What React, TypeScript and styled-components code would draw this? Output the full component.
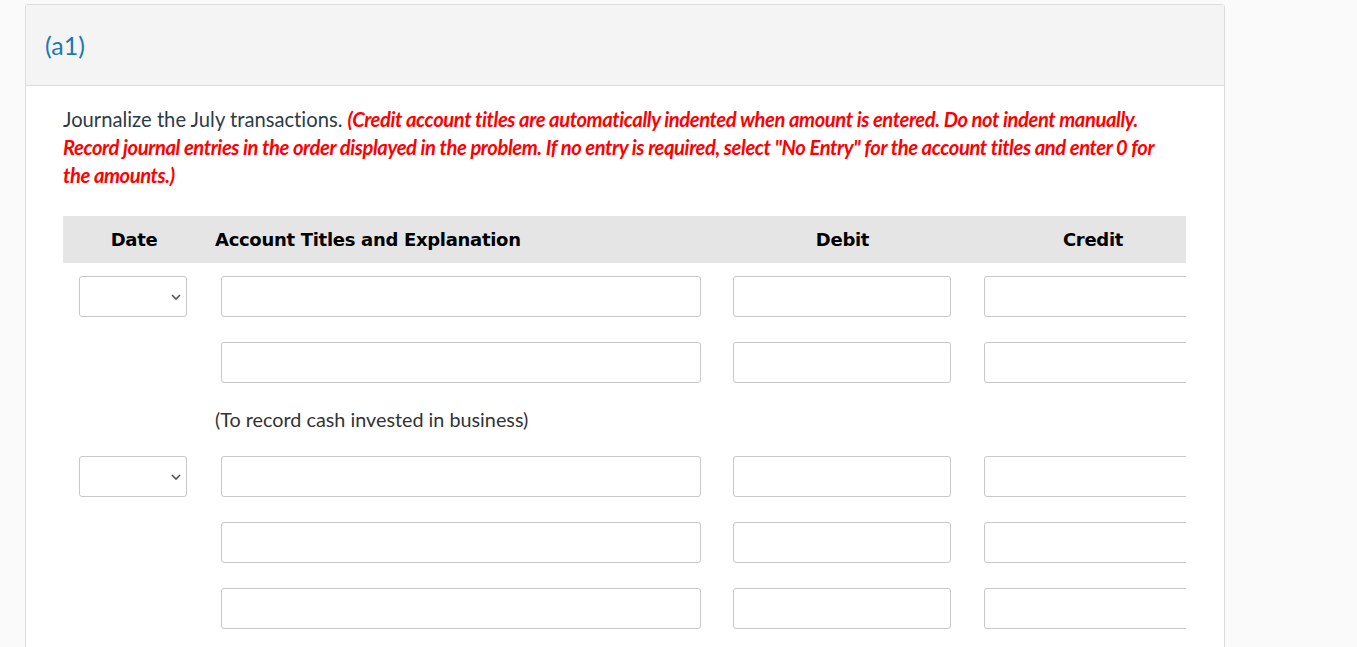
import React from "react";
import styled, { createGlobalStyle } from "styled-components";

const Global = createGlobalStyle`
  html, body { margin: 0; padding: 0; background: #fafafa; }
  body { font-family: Lato, "Open Sans", sans-serif; font-variant-ligatures: none; }
  * { box-sizing: border-box; }
`;

const Page = styled.div`
  padding: 4px 0 0 25px;
  height: 647px;
  overflow: hidden;
`;

const Card = styled.section`
  width: 1200px;
  border: 1px solid #dcdcdc;
  border-radius: 3px 3px 0 0;
  background: #fff;
  min-height: 700px;
`;

const CardHeader = styled.header`
  height: 81px;
  background: #f4f4f4;
  border-bottom: 1px solid #dcdcdc;
  display: flex;
  align-items: center;
  padding: 0 0 0 19px;
  font-size: 25px;
  color: #1c78b5;
  font-family: Lato, sans-serif;
`;

const Body = styled.div`
  padding: 19px 0 0 37px;
`;

const Instructions = styled.p`
  margin: 0;
  width: 1105px;
  font-size: 20.2px;
  line-height: 28px;
  color: #2d3b45;
`;

const Red = styled.em`
  color: #ff0000;
  font-weight: 700;
  font-style: italic;
  letter-spacing: -0.42px;
`;

const TableWrap = styled.div`
  margin-top: 27px;
  width: 1123px;
  overflow: hidden;
`;

const Grid = styled.div`
  display: grid;
  grid-template-columns: 142px 512px 251px 250px;
  width: 1155px;
`;

const HeaderRow = styled(Grid)`
  height: 47px;
  background: #e5e5e5;
  align-items: center;
  font-family: "DejaVu Sans", Verdana, sans-serif;
  font-weight: 700;
  font-size: 18px;
  letter-spacing: -0.3px;
  color: #000;
`;

const HeadCell = styled.div<{ $align?: "left" | "center" }>`
  text-align: ${(p) => p.$align ?? "center"};
  padding-left: ${(p) => (p.$align === "left" ? "10px" : "0")};
`;

const Rows = styled.div`
  display: flex;
  flex-direction: column;
  gap: 25px;
  padding-top: 13px;
`;

const EntryRow = styled(Grid)`
  height: 41px;
`;

const Cell = styled.div`
  padding-left: 16px;
`;

const TextInput = styled.input<{ $w: number }>`
  display: block;
  width: ${(p) => p.$w}px;
  height: 41px;
  border: 1px solid #c8c8c8;
  border-radius: 3px;
  background: #fff;
  padding: 0 8px;
  font: inherit;
  outline: none;
`;

const SelectBox = styled.div`
  width: 108px;
  height: 41px;
  border: 1px solid #c8c8c8;
  border-radius: 3px;
  background: #fff;
  display: flex;
  align-items: center;
  justify-content: flex-end;
  padding-right: 4px;
`;

const Explanation = styled.div`
  height: 23px;
  line-height: 23px;
  padding-left: 152px;
  font-size: 19.8px;
  color: #333;
`;

const Chevron = () => (
  <svg width="12" height="8" viewBox="0 0 12 8">
    <path d="M2 2 L6 6 L10 2" fill="none" stroke="#555" strokeWidth="1.6" />
  </svg>
);

const Entry: React.FC<{ date?: boolean }> = ({ date }) => (
  <EntryRow>
    <Cell>
      {date && (
        <SelectBox>
          <Chevron />
        </SelectBox>
      )}
    </Cell>
    <Cell>
      <TextInput $w={480} />
    </Cell>
    <Cell>
      <TextInput $w={218} />
    </Cell>
    <Cell>
      <TextInput $w={218} />
    </Cell>
  </EntryRow>
);

export default function App() {
  return (
    <>
      <Global />
      <Page>
        <Card>
          <CardHeader>(a1)</CardHeader>
          <Body>
            <Instructions>
              Journalize the July transactions.{" "}
              <Red>
                (Credit account titles are automatically indented when amount is entered. Do not
                indent manually. Record journal entries in the order displayed in the problem. If no
                entry is required, select "No Entry" for the account titles and enter 0 for the
                amounts.)
              </Red>
            </Instructions>
            <TableWrap>
              <HeaderRow>
                <HeadCell>Date</HeadCell>
                <HeadCell $align="left">Account Titles and Explanation</HeadCell>
                <HeadCell>Debit</HeadCell>
                <HeadCell>Credit</HeadCell>
              </HeaderRow>
              <Rows>
                <Entry date />
                <Entry />
                <Explanation>(To record cash invested in business)</Explanation>
                <Entry date />
                <Entry />
                <Entry />
              </Rows>
            </TableWrap>
          </Body>
        </Card>
      </Page>
    </>
  );
}
